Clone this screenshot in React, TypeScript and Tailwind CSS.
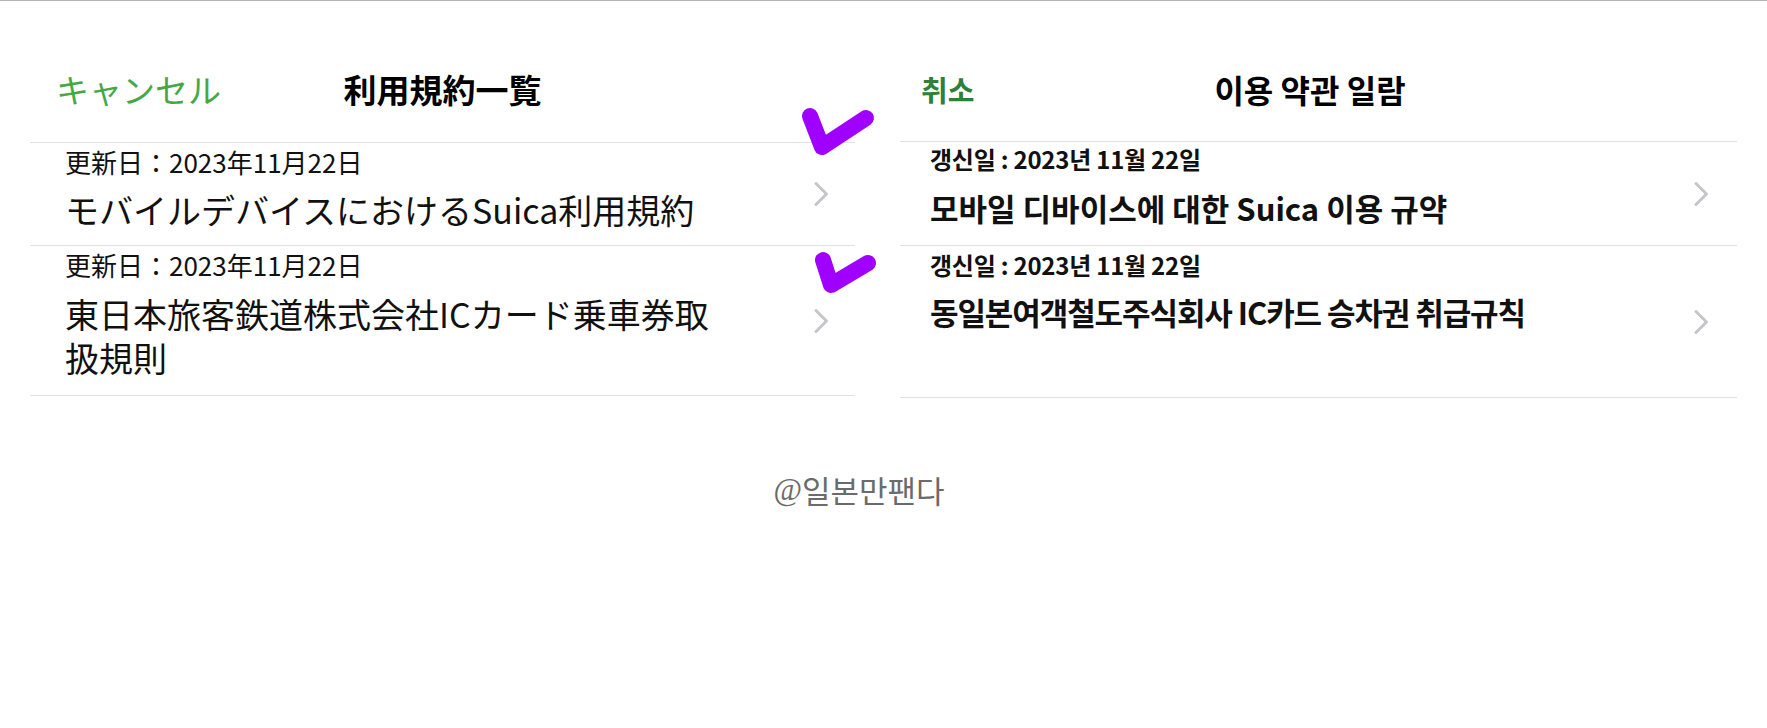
const jp = "font-['Noto_Sans_CJK_JP','Noto_Sans',sans-serif]";
const kr = "font-['Noto_Sans_CJK_KR','Noto_Sans',sans-serif]";

function Chevron({ className = "" }: { className?: string }) {
  return (
    <svg viewBox="0 0 18 28" className={`h-[28px] w-[18px] shrink-0 ${className}`} fill="none">
      <path d="M4 3.5l10.5 10.5L4 24.5" stroke="#c6c6ca" strokeWidth="3" strokeLinecap="round" strokeLinejoin="round" />
    </svg>
  );
}

function Check({ className = "", d }: { className?: string; d: string }) {
  return (
    <svg viewBox="0 0 80 60" className={`pointer-events-none absolute h-[60px] w-[80px] ${className}`} fill="none">
      <path d={d} stroke="#9f00ff" strokeWidth="16" strokeLinecap="round" strokeLinejoin="round" />
    </svg>
  );
}

function JapanesePanel() {
  return (
    <div className={`w-[825px] shrink-0 ${jp}`}>
      <div className="grid h-[141px] grid-cols-[1fr_auto_1fr] pt-[68px]">
        <div className="pl-[26px] text-[33px] leading-[40px] text-[#45a845]">キャンセル</div>
        <div className="text-[33px] font-bold leading-[40px] text-black">利用規約一覧</div>
        <div />
      </div>

      <div className="flex h-[103px] border-t border-[#e2e2e2]">
        <div className="w-[700px] pl-[35px] pt-[3px]">
          <div className="text-[26px] leading-[32px] text-[#111]">更新日：2023年11月22日</div>
          <div className="mt-[10px] text-[34px] leading-[44px] text-[#111]">モバイルデバイスにおけるSuica利用規約</div>
        </div>
        <div className="flex flex-1 items-center justify-end pr-[25px]">
          <Chevron />
        </div>
      </div>

      <div className="flex h-[151px] border-y border-[#e2e2e2]">
        <div className="w-[700px] pl-[35px] pt-[3px]">
          <div className="text-[26px] leading-[32px] text-[#111]">更新日：2023年11月22日</div>
          <div className="mt-[11px] text-[34px] leading-[44px] text-[#111]">東日本旅客鉄道株式会社ICカード乗車券取扱規則</div>
        </div>
        <div className="flex flex-1 items-center justify-end pr-[25px]">
          <Chevron />
        </div>
      </div>
    </div>
  );
}

function KoreanPanel() {
  return (
    <div className={`w-[837px] shrink-0 ${kr}`}>
      <div className="grid h-[140px] grid-cols-[1fr_auto_1fr] pt-[68px]">
        <div className="pl-[21px] text-[29px] font-bold leading-[40px] text-[#2f7f38]">취소</div>
        <div className="mr-[17px] text-[32px] font-bold leading-[40px] text-black">이용 약관 일람</div>
        <div />
      </div>

      <div className="flex h-[104px] border-t border-[#e2e2e2]">
        <div className="flex-1 pl-[30px] pt-[2px]">
          <div className="text-[24px] font-bold leading-[30px] tracking-[-0.01em] text-[#111]">갱신일 : 2023년 11월 22일</div>
          <div className="mt-[13px] text-[31px] font-bold leading-[42px] text-[#111]">모바일 디바이스에 대한 Suica 이용 규약</div>
        </div>
        <div className="flex items-center pr-[27px]">
          <Chevron className="w-[16px]" />
        </div>
      </div>

      <div className="flex h-[153px] border-y border-[#e2e2e2]">
        <div className="flex-1 pl-[30px] pt-[4px]">
          <div className="text-[24px] font-bold leading-[30px] tracking-[-0.01em] text-[#111]">갱신일 : 2023년 11월 22일</div>
          <div className="mt-[11px] text-[31px] font-bold leading-[42px] tracking-[-0.035em] text-[#111]">동일본여객철도주식회사 IC카드 승차권 취급규칙</div>
        </div>
        <div className="flex items-center pr-[27px]">
          <Chevron className="w-[16px]" />
        </div>
      </div>
    </div>
  );
}

export default function App() {
  return (
    <div className="relative min-h-[728px] w-full border-t border-[#b4b4b4] bg-white">
      <div className="flex gap-[45px] pl-[30px]">
        <JapanesePanel />
        <KoreanPanel />
      </div>

      <div className={`mt-[72px] flex justify-center pr-[49px] text-[31px] leading-[40px] text-[#6b6b6b] ${kr}`}>
        <span className="font-['Liberation_Serif',serif] font-light">@</span>
        <span>일본만팬다</span>
      </div>

      {/* marker ticks drawn on top of the screenshot */}
      <Check className="left-[798px] top-[102px]" d="M12 13 L24 44 L68 15" />
      <Check className="left-[808px] top-[243px]" d="M15 16 L23 41 L60 19" />
    </div>
  );
}
